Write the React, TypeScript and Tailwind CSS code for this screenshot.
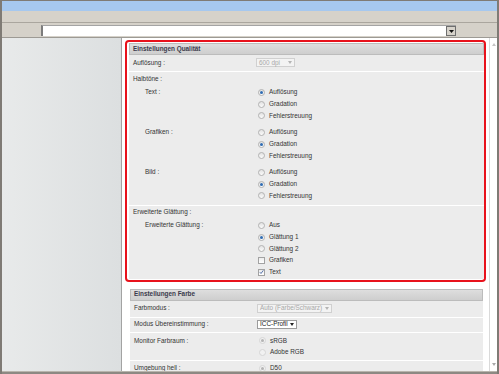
import React from "react";

type RadioProps = { checked?: boolean; disabled?: boolean };

function Radio({ checked, disabled }: RadioProps) {
  return (
    <span
      className={
        "flex h-[7px] w-[7px] shrink-0 items-center justify-center rounded-full border " +
        (disabled
          ? "border-[#d6d6d6] bg-[#f1f1f1]"
          : "border-[#b2b2b2] bg-gradient-to-b from-[#e2e2e2] to-[#fbfbfb]")
      }
    >
      {checked && (
        <span
          className={
            "h-[3px] w-[3px] rounded-full " +
            (disabled ? "bg-[#b4b4b4]" : "bg-[#2f6cb3]")
          }
        />
      )}
    </span>
  );
}

function Checkbox({ checked }: { checked?: boolean }) {
  return (
    <span className="flex h-[7px] w-[7px] shrink-0 items-center justify-center border border-[#a2a2a2] bg-gradient-to-b from-[#ececec] to-white">
      {checked && (
        <svg width="6" height="6" viewBox="0 0 6 6">
          <path d="M1 3.2 L2.4 4.8 L5.2 1" fill="none" stroke="#3a5c9c" strokeWidth="1" />
        </svg>
      )}
    </span>
  );
}

type Opt = { label: string; checked?: boolean; box?: boolean; disabled?: boolean };

function Options({ items }: { items: Opt[] }) {
  return (
    <div className="flex flex-col">
      {items.map((o) => (
        <div key={o.label} className="flex h-[11.7px] items-center gap-[4px] pl-[2px]">
          {o.box ? <Checkbox checked={o.checked} /> : <Radio checked={o.checked} disabled={o.disabled} />}
          <span className="text-[#333]">{o.label}</span>
        </div>
      ))}
    </div>
  );
}

function Select({ value, w, disabled }: { value: string; w: string; disabled?: boolean }) {
  return (
    <div
      className={
        "flex h-[9px] items-center justify-between border px-[2px] " +
        w +
        (disabled
          ? " border-[#d0d0d0] bg-[#f3f3f3] text-[#a8a8a8]"
          : " border-[#9c9c9c] bg-white text-[#222]")
      }
    >
      <span>{value}</span>
      <svg width="4" height="3" viewBox="0 0 4 3">
        <path d="M0 0h4L2 3z" fill={disabled ? "#b4b4b4" : "#222"} />
      </svg>
    </div>
  );
}

function Header({ title }: { title: string }) {
  return (
    <div className="flex h-[12px] items-center border border-[#bcbcbc] bg-gradient-to-b from-[#dedede] to-[#cecece] pl-[3px] font-bold text-[#3b3b4c]">
      {title}
    </div>
  );
}

export default function App() {
  return (
    <div className="flex h-[374px] w-[499px] flex-col overflow-hidden border-x-2 border-t border-[#7f7b75] bg-[#d5d1c9] font-['Liberation_Sans',Arial,sans-serif] text-[6.4px] leading-none">
      <div className="h-[10px] bg-[#a6c8ef]" />
      <div className="h-[12px] border-b border-[#aaa69e] bg-[#d6d2ca]" />
      <div className="flex h-[15px] items-start border-b border-[#9d9a94] pt-[2px]">
        <div className="w-[39px]" />
        <div className="flex h-[11px] w-[415px] items-center justify-end border-l-2 border-t border-l-[#7c7c7c] border-t-[#a4a4a4] bg-white">
          <div className="flex h-[10px] w-[10px] items-center justify-center border border-[#6e6e6e] bg-[#d6d2ca]">
            <svg width="5" height="3" viewBox="0 0 5 3">
              <path d="M0 0h5L2.5 3z" fill="#111" />
            </svg>
          </div>
        </div>
      </div>

      <div className="flex min-h-0 flex-1">
        <div className="w-[120px] border-r border-[#a3a3a3] bg-gradient-to-r from-[#e8eaea] to-[#dcdfe0]" />

        <div className="flex w-[367px] flex-col overflow-hidden bg-white">
          <div className="mx-[3px] mt-[2px] rounded-[4px] border-2 border-[#e8121c] pl-[2px] pt-[1px] pb-[0.5px]">
            <div className="bg-[#ececec]">
              <Header title="Einstellungen Qualität" />
              <div className="flex h-[16.5px] items-center border-b border-white pl-[4px]">
                <div className="w-[123px] text-[#333]">Auflösung :</div>
                <Select value="600 dpi" w="w-[39px]" disabled />
              </div>

              <div className="border-b border-white pb-[3px] pl-[4px]">
                <div className="flex h-[15px] items-center text-[#333]">Halbtöne :</div>
                <div className="flex">
                  <div className="flex h-[11.7px] w-[123px] items-center pl-[12px] text-[#333]">Text :</div>
                  <Options items={[{ label: "Auflösung", checked: true }, { label: "Gradation" }, { label: "Fehlerstreuung" }]} />
                </div>
                <div className="mt-[5px] flex">
                  <div className="flex h-[11.7px] w-[123px] items-center pl-[12px] text-[#333]">Grafiken :</div>
                  <Options items={[{ label: "Auflösung" }, { label: "Gradation", checked: true }, { label: "Fehlerstreuung" }]} />
                </div>
                <div className="mt-[5px] flex">
                  <div className="flex h-[11.7px] w-[123px] items-center pl-[12px] text-[#333]">Bild :</div>
                  <Options items={[{ label: "Auflösung" }, { label: "Gradation", checked: true }, { label: "Fehlerstreuung" }]} />
                </div>
              </div>

              <div className="pb-[1px] pl-[4px]">
                <div className="flex h-[14px] items-center text-[#333]">Erweiterte Glättung :</div>
                <div className="flex">
                  <div className="flex h-[11.7px] w-[123px] items-center pl-[12px] text-[#333]">Erweiterte Glättung :</div>
                  <Options
                    items={[
                      { label: "Aus" },
                      { label: "Glättung 1", checked: true },
                      { label: "Glättung 2" },
                      { label: "Grafiken", box: true },
                      { label: "Text", box: true, checked: true },
                    ]}
                  />
                </div>
              </div>
            </div>
          </div>

          <div className="ml-[8px] mr-[6px] mt-[7px] bg-[#ececec]">
            <Header title="Einstellungen Farbe" />
            <div className="flex h-[17px] items-center border-b border-white pl-[4px]">
              <div className="w-[123px] text-[#333]">Farbmodus :</div>
              <Select value="Auto (Farbe/Schwarz)" w="w-[75px]" disabled />
            </div>
            <div className="flex h-[15px] items-center border-b border-white pl-[4px]">
              <div className="w-[123px] text-[#333]">Modus Übereinstimmung :</div>
              <Select value="ICC-Profil" w="w-[40px]" />
            </div>
            <div className="flex border-b border-white pb-[1.5px] pl-[4px] pt-[2.5px]">
              <div className="flex h-[11.7px] w-[123px] items-center text-[#333]">Monitor Farbraum :</div>
              <Options items={[{ label: "sRGB", checked: true, disabled: true }, { label: "Adobe RGB", disabled: true }]} />
            </div>
            <div className="flex pb-[4px] pl-[4px] pt-[1.5px]">
              <div className="flex h-[11.7px] w-[123px] items-center text-[#333]">Umgebung hell :</div>
              <Options items={[{ label: "D50", checked: true, disabled: true }]} />
            </div>
          </div>
        </div>

        <div className="flex w-[8px] flex-col items-center justify-between border-l border-[#dadada] bg-white py-[5px]">
          <svg width="4" height="3" viewBox="0 0 4 3">
            <path d="M2 0L4 3H0z" fill="#c4c4c4" />
          </svg>
          <svg width="4" height="3" viewBox="0 0 4 3">
            <path d="M0 0h4L2 3z" fill="#a8a8a8" />
          </svg>
        </div>
      </div>
      <div className="h-[3px] border-t border-[#b9b5ad] bg-[#8d8983]" />
    </div>
  );
}
